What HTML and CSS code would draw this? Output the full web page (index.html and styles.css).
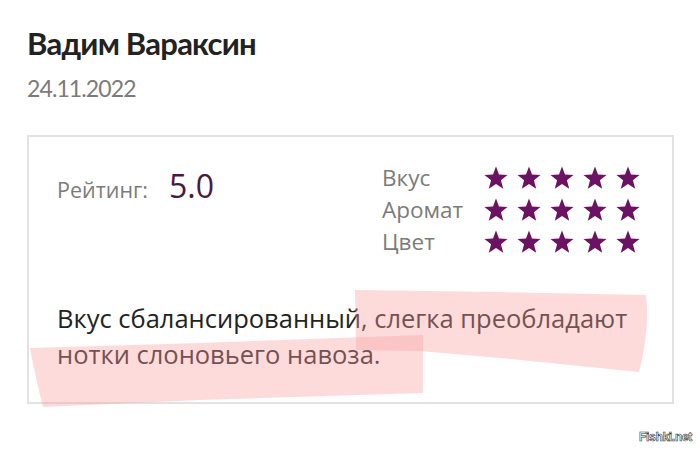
FILE: index.html
```html
<!DOCTYPE html>
<html lang="ru">
<head>
    <meta charset="UTF-8">
    <meta name="viewport" content="width=device-width, initial-scale=1.0">
    <title>Отзыв</title>
    <link rel="stylesheet" href="styles.css">
</head>
<body>

<div class="review">
    <h1 class="author">Вадим Вараксин</h1>
    <div class="date">24.11.2022</div>

    <div class="card">
        <div class="scores">
            <div class="total">
                <span class="total-label">Рейтинг:</span>
                <span class="total-value">5.0</span>
            </div>
            <div class="criteria" id="criteria"></div>
        </div>
        <p class="text">Вкус сбалансированный, слегка преобладают нотки слоновьего навоза.</p>
    </div>
</div>

<svg class="marker" width="700" height="449" viewBox="0 0 700 449">
    <path d="M355 290 L500 292 L646 295 Q650 330 639 372 L500 358 L420 351 L356 350 Z"/>
    <path d="M30 348 L200 343 L423 335 L423 393 L200 400 L43 407 Q36 380 30 348 Z"/>
</svg>

<div class="watermark">Fishki.net</div>

<template id="starTpl">
    <svg class="star" viewBox="0 0 24 24"><path d="M12 0.6 L15 8.4 L23.5 8.9 L16.9 14.3 L19.2 22.7 L12 18 L4.8 22.7 L7.1 14.3 L0.5 8.9 L9 8.4 Z"/></svg>
</template>

<script>
    const criteria = [
        { name: "Вкус", value: 5 },
        { name: "Аромат", value: 5 },
        { name: "Цвет", value: 5 }
    ];
    const criteriaElement = document.getElementById("criteria");
    const starTpl = document.getElementById("starTpl");

    criteria.forEach(item => {
        const label = document.createElement("span");
        label.className = "criteria-label";
        label.textContent = item.name;

        const stars = document.createElement("span");
        stars.className = "stars";
        for (let i = 0; i < item.value; i++) {
            stars.appendChild(starTpl.content.cloneNode(true));
        }

        criteriaElement.appendChild(label);
        criteriaElement.appendChild(stars);
    });
</script>

</body>
</html>
```

FILE: styles.css
```css
body {
    font-family: "Open Sans", "Lato", sans-serif;
    background-color: #fff;
    margin: 0;
    position: relative;
    width: 700px;
    height: 449px;
    overflow: hidden;
}
.review {
    padding: 21px 26px 0 27px;
}
.author {
    font-family: "Lato", sans-serif;
    font-size: 31px;
    font-weight: 700;
    color: #222;
    margin: 0;
    line-height: 44px;
    letter-spacing: -0.75px;
}
.date {
    font-family: "Lato", sans-serif;
    font-size: 23px;
    color: #7b7b7b;
    margin-top: 7px;
    line-height: 32px;
    letter-spacing: -0.9px;
}
.card {
    margin-top: 31px;
    border: 2px solid #e2e2e2;
    padding: 27px 20px 28px 28px;
    height: 269px;
    box-sizing: border-box;
}
.scores {
    display: flex;
}
.total {
    width: 325px;
    flex-shrink: 0;
    display: flex;
    align-items: baseline;
}
.total-label {
    font-size: 21.5px;
    color: #7b7b7b;
    margin-right: 21px;
}
.total-value {
    font-size: 32px;
    color: #4a1942;
}
.criteria {
    display: grid;
    grid-template-columns: 102px auto;
    row-gap: 4px;
    align-items: center;
}
.criteria-label {
    font-size: 22.5px;
    color: #7b7b7b;
    line-height: 28px;
}
.stars {
    display: flex;
    gap: 9px;
}
.star {
    width: 24px;
    height: 24px;
    fill: #6c1262;
}
.text {
    font-size: 25.5px;
    line-height: 36px;
    color: #222;
    margin: 44px 0 0;
}
.marker {
    position: absolute;
    top: 0;
    left: 0;
    pointer-events: none;
}
.marker path {
    fill: rgba(251, 160, 160, 0.38);
}
.watermark {
    position: absolute;
    right: 8px;
    bottom: 5px;
    font-family: "Liberation Sans", sans-serif;
    font-size: 12px;
    font-weight: 700;
    color: #fff;
    -webkit-text-stroke: 0.6px #333;
    letter-spacing: -0.3px;
}
```
